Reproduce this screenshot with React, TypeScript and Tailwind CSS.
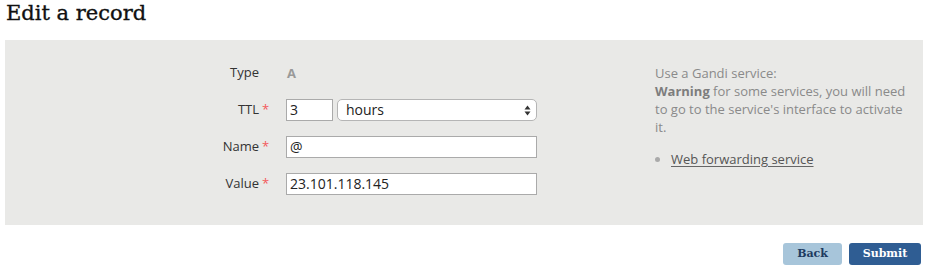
import React from "react";

const sans = { fontFamily: '"Open Sans", "DejaVu Sans", sans-serif' };
const slab = { fontFamily: '"DejaVu Serif", "Liberation Serif", serif' };

function Row({ label, req, children }: { label: string; req?: boolean; children: React.ReactNode }) {
  return (
    <div className="flex h-[22px] items-center">
      <div className="flex w-[281px] items-center justify-end pr-[17px] text-[13px] text-[#333]">
        <span>{label}</span>
        <span className={"ml-[3px] w-[7px] text-[13px] " + (req ? "text-[#f3595b]" : "text-transparent")}>*</span>
      </div>
      {children}
    </div>
  );
}

export default function App() {
  return (
    <div className="w-[928px] h-[270px] bg-white px-[5px]" style={sans}>
      <h1 className="h-[30px] pt-[1px] pl-[1px] text-[21px] leading-[24px] text-[#111] [-webkit-text-stroke:0.35px_#111]" style={slab}>
        Edit a record
      </h1>
      <div className="mt-[10px] flex h-[185px] bg-[#e9e9e7] pt-[22px]">
        <div className="flex flex-col gap-[15px]">
          <Row label="Type">
            <span className="pl-[1px] pt-[1px] text-[13px] font-bold text-[#999]">A</span>
          </Row>
          <Row label="TTL" req>
            <div className="flex items-center gap-[4px]">
              <div className="h-[22px] w-[47px] border border-[#aaa] bg-white pl-[3px] text-[14px] leading-[20px] text-[#222]">3</div>
              <div className="flex h-[22px] w-[200px] items-center justify-between rounded-[5px] border border-[#b5b5b5] bg-white pl-[8px] pr-[5px] text-[14px] text-[#222]">
                <span className="leading-[20px]">hours</span>
                <svg width="7" height="11" viewBox="0 0 7 11">
                  <path d="M3.5 0.5 L6.5 4.5 L0.5 4.5 Z" fill="#333" />
                  <path d="M3.5 10.5 L6.5 6.5 L0.5 6.5 Z" fill="#333" />
                </svg>
              </div>
            </div>
          </Row>
          <Row label="Name" req>
            <div className="h-[22px] w-[251px] border border-[#aaa] bg-white pl-[3px] text-[14px] leading-[20px] text-[#222]">@</div>
          </Row>
          <Row label="Value" req>
            <div className="h-[22px] w-[251px] border border-[#aaa] bg-white pl-[3px] text-[14px] leading-[20px] text-[#222]">23.101.118.145</div>
          </Row>
        </div>
        <div className="ml-[118px] w-[258px] pt-[2px] text-[13px] leading-[18px] text-[#8a8a8a]">
          <p>
            Use a Gandi service:
            <br />
            <span className="font-bold text-[#7d7d7d]">Warning</span> for some services, you will need to go to the service's interface to activate it.
          </p>
          <ul className="mt-[14px] list-disc pl-[16px] marker:text-[#aaa]">
            <li>
              <a className="text-[#555] underline underline-offset-2 decoration-[#666]">Web forwarding service</a>
            </li>
          </ul>
        </div>
      </div>
      <div className="mt-[18px] flex justify-end gap-[7px] pr-[2px]" style={slab}>
        <button className="h-[22px] w-[59px] rounded-[3px] bg-[#a7c5da] text-[11px] font-bold text-[#1d3a60]">Back</button>
        <button className="h-[22px] w-[72px] rounded-[3px] bg-[#2f5d93] text-[11px] font-bold text-white">Submit</button>
      </div>
    </div>
  );
}
